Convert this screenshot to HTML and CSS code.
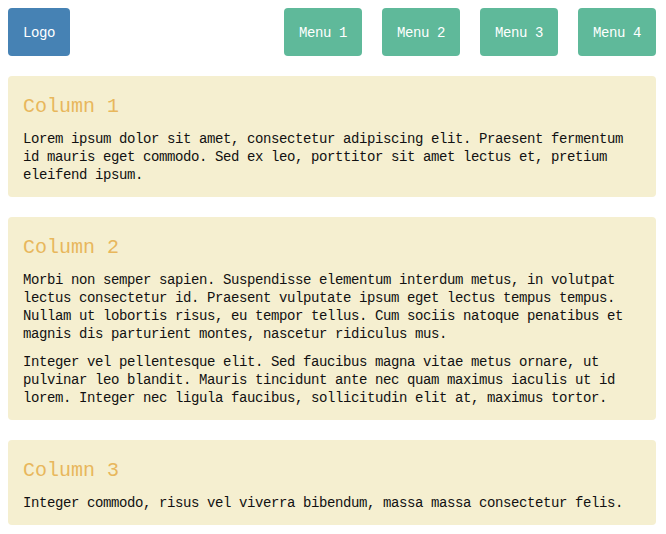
FILE: index.html
```html
<!DOCTYPE html>
<html lang="en">
<head>
<meta charset="utf-8">
<title>Layout</title>
<link rel="stylesheet" href="styles.css">
</head>
<body>
<header class="header">
  <div class="logo">Logo</div>
  <nav class="menu">
    <a class="menu-item">Menu 1</a>
    <a class="menu-item">Menu 2</a>
    <a class="menu-item">Menu 3</a>
    <a class="menu-item">Menu 4</a>
  </nav>
</header>
<main class="columns">
  <section class="card">
    <h2 class="card-title">Column 1</h2>
    <p class="card-text">Lorem ipsum dolor sit amet, consectetur adipiscing elit. Praesent fermentum id mauris eget commodo. Sed ex leo, porttitor sit amet lectus et, pretium eleifend ipsum.</p>
  </section>
  <section class="card">
    <h2 class="card-title">Column 2</h2>
    <p class="card-text">Morbi non semper sapien. Suspendisse elementum interdum metus, in volutpat lectus consectetur id. Praesent vulputate ipsum eget lectus tempus tempus. Nullam ut lobortis risus, eu tempor tellus. Cum sociis natoque penatibus et magnis dis parturient montes, nascetur ridiculus mus.</p>
    <p class="card-text">Integer vel pellentesque elit. Sed faucibus magna vitae metus ornare, ut pulvinar leo blandit. Mauris tincidunt ante nec quam maximus iaculis ut id lorem. Integer nec ligula faucibus, sollicitudin elit at, maximus tortor.</p>
  </section>
  <section class="card">
    <h2 class="card-title">Column 3</h2>
    <p class="card-text">Integer commodo, risus vel viverra bibendum, massa massa consectetur felis.</p>
  </section>
</main>
</body>
</html>
```

FILE: styles.css
```css
html, body {
  background: #ffffff;
}
body {
  margin: 8px 10px 8px 8px;
  font-family: "Liberation Mono", "DejaVu Sans Mono", monospace;
  font-size: 14px;
  letter-spacing: -0.4px;
  line-height: 18px;
  color: #111111;
}
.header {
  display: flex;
  justify-content: space-between;
  align-items: center;
  margin-bottom: 20px;
}
.logo {
  height: 46px;
  line-height: 46px;
  padding: 2px 15px 0;
  background: #4682b4;
  color: #ffffff;
  border-radius: 4px;
}
.menu {
  display: flex;
  gap: 20px;
}
.menu-item {
  height: 46px;
  line-height: 46px;
  padding: 2px 15px 0;
  background: #5fb99a;
  color: #ffffff;
  border-radius: 4px;
  text-decoration: none;
}
.columns {
  display: flex;
  flex-direction: column;
  gap: 20px;
}
.card {
  background: #f5efd0;
  border-radius: 4px;
  padding: 17px 15px 13px;
}
.card-title {
  margin: 0 0 9px;
  font-size: 20px;
  font-weight: normal;
  line-height: 28px;
  letter-spacing: 0;
  color: #e8b75c;
}
.card-text {
  margin: 0;
}
.card-text + .card-text {
  margin-top: 10px;
}
```
